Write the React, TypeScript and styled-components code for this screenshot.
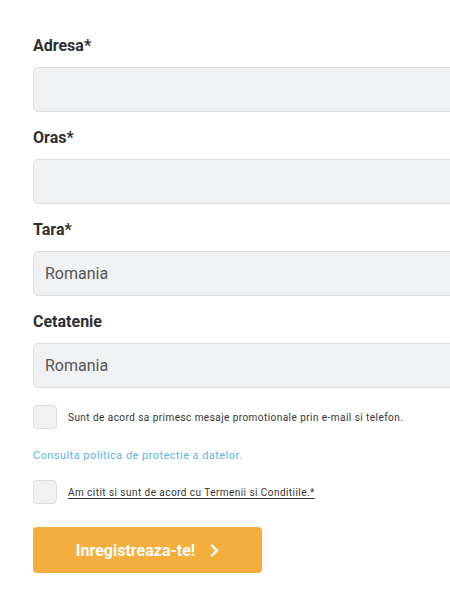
import React from "react";
import styled, { createGlobalStyle } from "styled-components";

const Global = createGlobalStyle`
  html, body { margin: 0; padding: 0; background: #ffffff; overflow: hidden; }
  body { font-family: Roboto, "Liberation Sans", Arial, sans-serif; }
`;

const Form = styled.form`
  display: flex;
  flex-direction: column;
  padding: 37px 0 0 33px;
  width: 417px;
  overflow: hidden;
  box-sizing: content-box;
`;

const Field = styled.div`
  display: flex;
  flex-direction: column;
  gap: 12px;
  margin-bottom: 17px;
`;

const Label = styled.label`
  font-size: 16px;
  font-weight: 700;
  color: #2f2f2f;
  line-height: 18px;
  height: 18px;
`;

const Input = styled.div`
  box-sizing: border-box;
  height: 45px;
  width: 460px;
  flex: none;
  background: #f0f1f2;
  border: 1px solid #dcdddf;
  border-radius: 5px;
  display: flex;
  align-items: center;
  padding-left: 11px;
  font-size: 16px;
  color: #555555;
`;

const CheckRow = styled.div<{ $mt: number }>`
  display: flex;
  align-items: center;
  gap: 11px;
  margin-top: ${(p) => p.$mt}px;
  height: 24px;
`;

const Box = styled.span`
  box-sizing: border-box;
  width: 24px;
  height: 24px;
  border: 1px solid #dcdddf;
  background: #f0f1f2;
  border-radius: 4px;
  flex: none;
`;

const CheckText = styled.span<{ $underline?: boolean }>`
  font-size: 10px;
  letter-spacing: 0.45px;
  color: #333;
  white-space: nowrap;
  text-decoration: ${(p) => (p.$underline ? "underline" : "none")};
  text-underline-offset: 2px;
`;

const Link = styled.a`
  margin-top: 20px;
  font-size: 11px;
  letter-spacing: 0.45px;
  color: #5db4e6;
  text-decoration: none;
  line-height: 14px;
`;

const Button = styled.button`
  margin-top: 23px;
  width: 229px;
  height: 46px;
  border: none;
  border-radius: 4px;
  background: #f4ae3d;
  color: #fff;
  font-family: Roboto, "Liberation Sans", Arial, sans-serif;
  font-size: 16px;
  font-weight: 700;
  display: flex;
  align-items: center;
  justify-content: center;
  gap: 15px;
  padding: 0;
`;

const fields: { label: string; value?: string }[] = [
  { label: "Adresa*" },
  { label: "Oras*" },
  { label: "Tara*", value: "Romania" },
  { label: "Cetatenie", value: "Romania" },
];

export default function App() {
  return (
    <>
      <Global />
      <Form>
        {fields.map((f) => (
          <Field key={f.label}>
            <Label>{f.label}</Label>
            <Input>{f.value}</Input>
          </Field>
        ))}
        <CheckRow $mt={0}>
          <Box />
          <CheckText>Sunt de acord sa primesc mesaje promotionale prin e-mail si telefon.</CheckText>
        </CheckRow>
        <Link>Consulta politica de protectie a datelor.</Link>
        <CheckRow $mt={17}>
          <Box />
          <CheckText $underline>Am citit si sunt de acord cu Termenii si Conditiile.*</CheckText>
        </CheckRow>
        <Button type="button">
          Inregistreaza-te!
          <svg width="9" height="13" viewBox="0 0 9 13" fill="none">
            <path d="M2 1.5 L7 6.5 L2 11.5" stroke="#fff" strokeWidth="2.4" strokeLinecap="round" strokeLinejoin="round" />
          </svg>
        </Button>
      </Form>
    </>
  );
}
